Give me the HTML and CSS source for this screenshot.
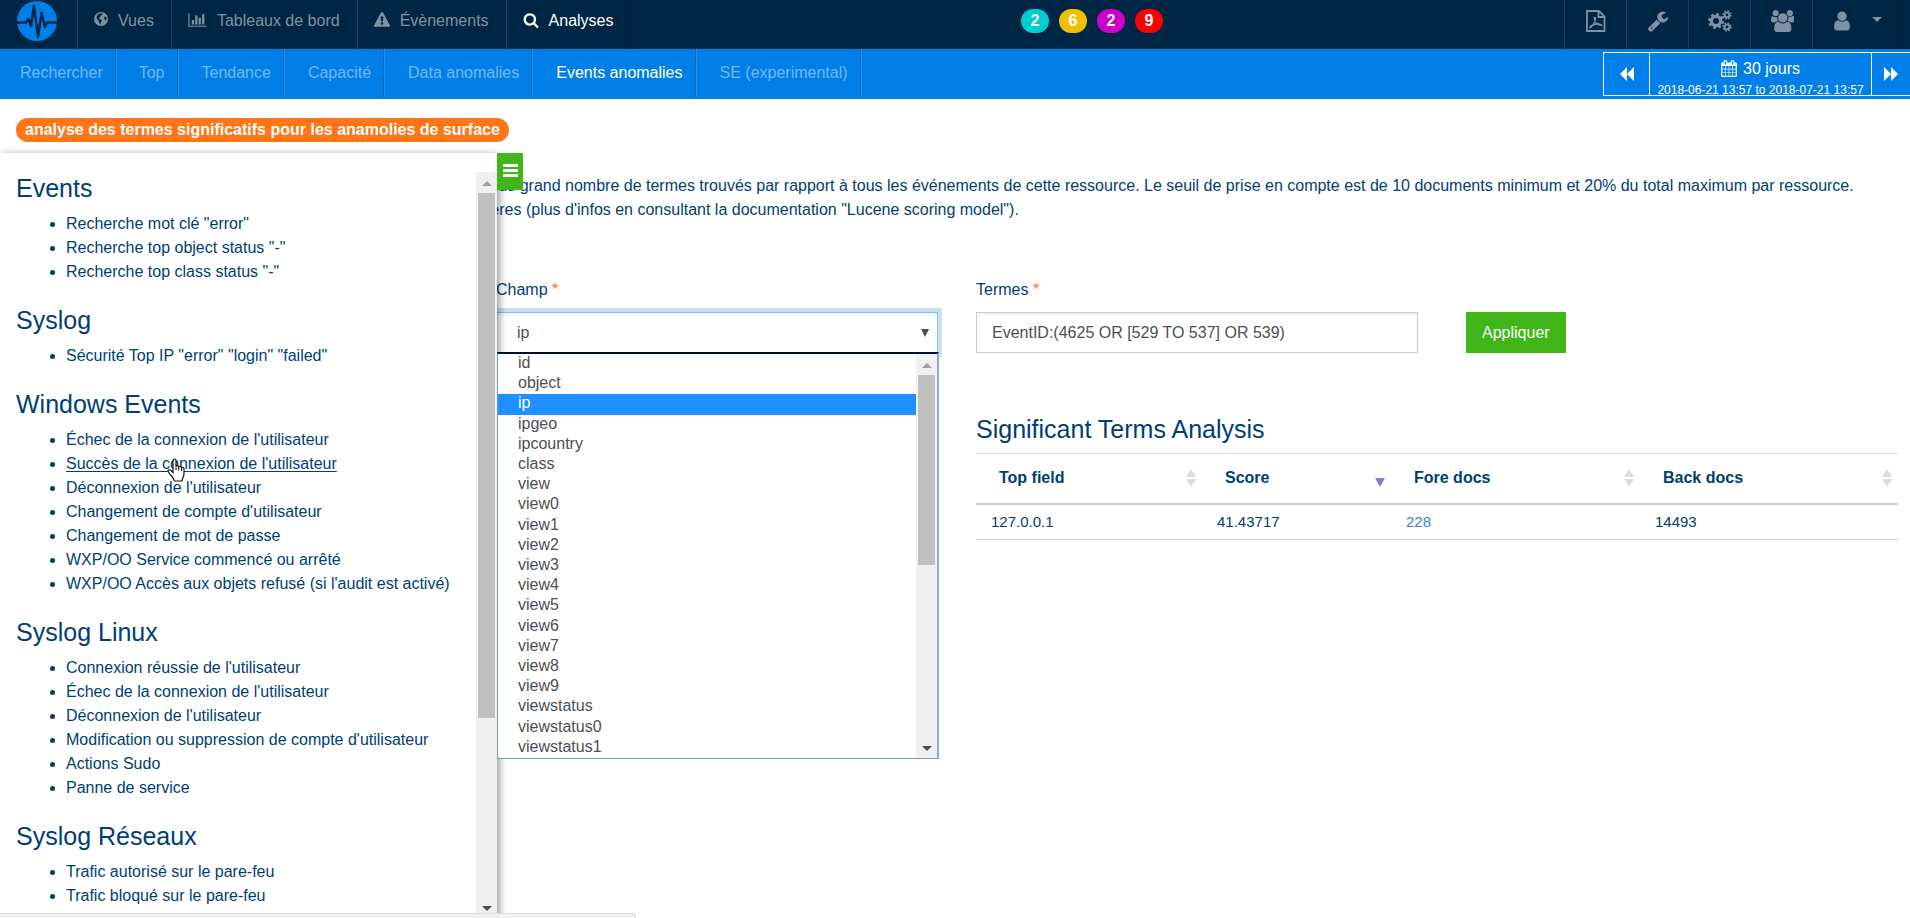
FILE: index.html
```
<!DOCTYPE html>
<html lang="fr">
<head>
<meta charset="utf-8">
<title>Events anomalies</title>
<link rel="stylesheet" href="styles.css">
</head>
<body>
<header class="topbar">
  <a class="logo" href="#" aria-label="Accueil">
    <svg width="40" height="40" viewBox="0 0 40 40"><circle cx="20" cy="20" r="20" fill="#007fe9"/><path d="M0 21.500H9L11.500 18L14 25L17 5L21 36L24.500 12L28 26L30 21.500H40" fill="none" stroke="#002645" stroke-width="2.400" stroke-linejoin="round"/></svg>
  </a>
  <nav class="mainnav">
    <a href="#"><svg width="14" height="14" viewBox="0 0 14 14"><circle cx="7" cy="7" r="7" fill="currentColor"/><path d="M5.500 1.500L8 1.200L9 2L7.500 3.200L6.300 4L6.700 5L5.500 5.300L5 6.800L7 7.600L8 9L6.800 10.500L6.200 12.500L5 10.500L4.700 8.500L3 7L2.500 5L3.500 3ZM10.500 4.500L12.300 5L12.600 7L11.800 8.800L10.800 8L10 6Z" fill="#002645"/></svg>Vues</a>
    <a href="#"><svg class="wide" width="19" height="16" viewBox="0 0 2048 1792"><path fill="currentColor" d="M640 896v512h-256v-512h256zm384-512v1024h-256v-1024h256zm1024 1152v128h-2048v-1536h128v1408h1920zm-640-896v768h-256v-768h256zm384-384v1152h-256v-1152h256z"/></svg>Tableaux de bord</a>
    <a href="#"><svg width="16" height="16" viewBox="0 0 1792 1792"><path fill="currentColor" d="M1024 1375v-190q0-14-9.500-23.500t-22.500-9.500h-192q-13 0-22.500 9.500t-9.500 23.500v190q0 14 9.500 23.500t22.500 9.500h192q13 0 22.500-9.500t9.500-23.500zm-2-374l18-459q0-12-10-19-13-11-24-11h-220q-11 0-24 11-10 7-10 21l17 457q0 10 10 16.500t24 6.500h185q14 0 23.500-6.500t10.500-16.500zm-14-934l768 1408q35 63-2 126-17 29-46.500 46t-63.500 17h-1536q-34 0-63.500-17t-46.500-46q-37-63-2-126l768-1408q17-31 47-49t65-18 65 18 47 49z"/></svg>Évènements</a>
    <a class="active" href="#"><svg width="16" height="16" viewBox="0 0 1792 1792"><path fill="currentColor" d="M1216 832q0-185-131.500-316.500t-316.500-131.500-316.500 131.500-131.500 316.500 131.500 316.500 316.500 131.500 316.500-131.500 131.500-316.500zm512 832q0 52-38 90t-90 38q-54 0-90-38l-343-342q-179 124-399 124-143 0-273.500-55.500t-225-150-150-225-55.500-273.500 55.500-273.500 150-225 225-150 273.500-55.500 273.500 55.500 225 150 150 225 55.500 273.500q0 220-124 399l343 343q37 37 37 90z"/></svg>Analyses</a>
  </nav>
  <div class="badges">
    <span class="badge teal">2</span><span class="badge yellow">6</span><span class="badge purple">2</span><span class="badge red">9</span>
  </div>
  <div class="tools">
    <a href="#" aria-label="PDF"><svg width="20" height="22" viewBox="0 0 20 22" fill="none" stroke="currentColor" stroke-width="1.800"><path d="M1 1H13L18.500 6.500V21H1ZM12.500 1V7H18.500"/><path stroke-width="1.300" d="M4 18C6 17 9.500 12 9.500 8.500C9.500 7 8 7 8.200 8.500C8.500 12 12 15.500 15.500 15.500C16.500 15 15 14 12 14C9 14.200 5 15.500 4 17Z"/></svg></a>
    <a href="#" aria-label="Outils"><svg width="22" height="22" viewBox="0 0 1792 1792"><path fill="currentColor" d="M448 1472q0-26-19-45t-45-19-45 19-19 45 19 45 45 19 45-19 19-45zm644-420l-682 682q-37 37-90 37-52 0-91-37l-106-108q-38-36-38-90 0-53 38-91l681-681q39 98 114.500 173.500t173.500 114.500zm634-435q0 39-23 106-47 134-164.500 217.500t-258.500 83.500q-185 0-316.500-131.500t-131.500-316.500 131.500-316.500 316.500-131.500q58 0 121.500 16.500t107.500 46.500q16 11 16 28t-16 28l-293 169v224l193 107q5-3 79-48.500t135.500-81 70.500-35.500q15 0 23.500 10t8.500 25z"/></svg></a>
    <a href="#" aria-label="Configuration"><svg width="24" height="22" viewBox="0 0 24 22" fill="none" stroke="currentColor"><circle cx="8" cy="11" r="4.600" stroke-width="3.200"/><circle cx="8" cy="11" r="6.800" stroke-width="2.400" stroke-dasharray="2.800 2.540"/><circle cx="19" cy="5" r="2.400" stroke-width="1.900"/><circle cx="19" cy="5" r="3.900" stroke-width="1.600" stroke-dasharray="1.600 1.463"/><circle cx="19" cy="17" r="2.400" stroke-width="1.900"/><circle cx="19" cy="17" r="3.900" stroke-width="1.600" stroke-dasharray="1.600 1.463"/></svg></a>
    <a href="#" aria-label="Groupes"><svg width="24" height="22" viewBox="0 0 1920 1792"><path fill="currentColor" d="M657 896q-162 5-265 128h-134q-82 0-138-40.500t-56-118.500q0-353 124-353 6 0 43.500 21t97.500 42.500 119 21.500q67 0 133-23-5 37-5 66 0 159 93 293zm1071 637q0 120-73 189.500t-194 69.500h-874q-121 0-194-69.500t-73-189.500q0-53 3.500-103.500t14-109 26.500-108.500 43-97.500 62-81 85.500-53.500 111.500-20q10 0 43 21.500t73 48 107 48 135 21.500 135-21.500 107-48 73-48 43-21.500q61 0 111.500 20t85.500 53.500 62 81 43 97.500 26.500 108.500 14 109 3.500 103.500zm-1024-1277q0 106-75 181t-181 75-181-75-75-181 75-181 181-75 181 75 75 181zm704 384q0 159-112.500 271.500t-271.500 112.500-271.500-112.500-112.500-271.500 112.500-271.500 271.500-112.500 271.500 112.500 112.500 271.500zm576 225q0 78-56 118.500t-138 40.500h-134q-103-123-265-128 93-134 93-293 0-29-5-66 66 23 133 23 59 0 119-21.500t97.500-42.500 43.500-21q124 0 124 353zm-128-609q0 106-75 181t-181 75-181-75-75-181 75-181 181-75 181 75 75 181z"/></svg></a>
    <a class="account" href="#" aria-label="Compte"><svg width="22" height="22" viewBox="0 0 1792 1792"><path fill="currentColor" d="M1536 1399q0 109-62.500 187t-150.500 78h-854q-88 0-150.500-78t-62.500-187q0-85 8.500-160.500t31.500-152 58.500-131 94-89 134.500-34.500q131 128 313 128t313-128q76 0 134.500 34.500t94 89 58.500 131 31.500 152 8.500 160.500zm-256-887q0 159-112.500 271.500t-271.500 112.500-271.500-112.500-112.500-271.500 112.500-271.500 271.500-112.500 271.500 112.500 112.500 271.500z"/></svg><svg width="10" height="5" viewBox="0 0 10 5"><path d="M0 0H10L5 5Z" fill="currentColor"/></svg></a>
  </div>
</header>
<div class="subbar">
  <nav class="subnav">
    <a href="#">Rechercher</a><a href="#">Top</a><a href="#">Tendance</a><a href="#">Capacité</a><a href="#">Data anomalies</a><a class="active" href="#">Events anomalies</a><a href="#">SE (experimental)</a>
  </nav>
  <div class="period">
    <button aria-label="Précédent"><svg width="14" height="14" viewBox="0 0 14 14"><path d="M7 0V14L0 7ZM14 0V14L7 7Z" fill="currentColor"/></svg></button>
    <button class="range"><span class="span"><svg width="16" height="17" viewBox="0 0 1664 1792"><path fill="currentColor" d="M128 1664h288v-288h-288v288zm352 0h320v-288h-320v288zm-352-352h288v-320h-288v320zm352 0h320v-320h-320v320zm-352-384h288v-288h-288v288zm736 736h320v-288h-320v288zm-384-736h320v-288h-320v288zm768 736h288v-288h-288v288zm-384-352h320v-320h-320v320zm-352-864v-288q0-13-9.500-22.500t-22.500-9.500h-64q-13 0-22.500 9.500t-9.500 22.500v288q0 13 9.500 22.500t22.500 9.500h64q13 0 22.500-9.500t9.500-22.500zm736 864h288v-320h-288v320zm-384-384h320v-288h-320v288zm384 0h288v-288h-288v288zm32-480v-288q0-13-9.500-22.500t-22.500-9.500h-64q-13 0-22.500 9.500t-9.500 22.500v288q0 13 9.500 22.500t22.500 9.500h64q13 0 22.500-9.500t9.500-22.500zm384-64v1280q0 52-38 90t-90 38h-1408q-52 0-90-38t-38-90v-1280q0-52 38-90t90-38h128v-96q0-66 47-113t113-47h64q66 0 113 47t47 113v96h384v-96q0-66 47-113t113-47h64q66 0 113 47t47 113v96h128q52 0 90 38t38 90z"/></svg>30 jours</span><span class="dates">2018-06-21 13:57 to 2018-07-21 13:57</span></button>
    <button aria-label="Suivant"><svg width="14" height="14" viewBox="0 0 14 14"><path d="M0 0V14L7 7ZM7 0V14L14 7Z" fill="currentColor"/></svg></button>
  </div>
</div>
<main class="page">
  <h1 class="title">analyse des termes significatifs pour les anamolies de surface</h1>
  <p class="intro">le plus grand nombre de termes trouvés par rapport à tous les événements de cette ressource. Le seuil de prise en compte est de 10 documents minimum et 20% du total maximum par ressource.<br>critères (plus d'infos en consultant la documentation "Lucene scoring model").</p>
  <form class="filters">
    <div class="field champ">
      <label for="champ">Champ <span class="req">*</span></label>
      <div class="picker">
        <select id="champ"><option>ip</option></select>
        <svg class="picker-arrow" width="8" height="8" viewBox="0 0 8 8"><path d="M0 0H8L4 8Z" fill="#4d4d4d"/></svg>
        <div class="dropdown">
          <ul role="listbox" aria-label="Champ">
            <li role="option">id</li><li role="option">object</li><li role="option" class="selected" aria-selected="true">ip</li><li role="option">ipgeo</li><li role="option">ipcountry</li><li role="option">class</li><li role="option">view</li><li role="option">view0</li><li role="option">view1</li><li role="option">view2</li><li role="option">view3</li><li role="option">view4</li><li role="option">view5</li><li role="option">view6</li><li role="option">view7</li><li role="option">view8</li><li role="option">view9</li><li role="option">viewstatus</li><li role="option">viewstatus0</li><li role="option">viewstatus1</li>
          </ul>
          <div class="scrollbar short"><i class="up"></i><i class="thumb"></i><i class="down"></i></div>
        </div>
      </div>
    </div>
    <div class="field termes">
      <label for="termes">Termes <span class="req">*</span></label>
      <input id="termes" type="text" value="EventID:(4625 OR [529 TO 537] OR 539)">
    </div>
    <button class="apply" type="button">Appliquer</button>
  </form>
  <div class="results">
    <section class="analysis">
      <h2>Significant Terms Analysis</h2>
      <table>
        <colgroup><col class="c1"><col class="c2"><col class="c3"><col class="c4"></colgroup>
        <thead><tr>
          <th><span class="th">Top field<svg width="10" height="18" viewBox="0 0 10 18"><path d="M5 0L10 8H0ZM0 10H10L5 18Z" fill="#dcdcdc"/></svg></span></th>
          <th><span class="th">Score<svg width="10" height="18" viewBox="0 0 10 18"><path d="M0 9H10L5 18Z" fill="#7f7fe0"/></svg></span></th>
          <th><span class="th">Fore docs<svg width="10" height="18" viewBox="0 0 10 18"><path d="M5 0L10 8H0ZM0 10H10L5 18Z" fill="#dcdcdc"/></svg></span></th>
          <th><span class="th">Back docs<svg width="10" height="18" viewBox="0 0 10 18"><path d="M5 0L10 8H0ZM0 10H10L5 18Z" fill="#dcdcdc"/></svg></span></th>
        </tr></thead>
        <tbody><tr><td>127.0.0.1</td><td>41.43717</td><td><a href="#">228</a></td><td>14493</td></tr></tbody>
      </table>
    </section>
  </div>
  <aside class="drawer">
    <button class="toggle" aria-label="Menu"><svg width="15" height="13" viewBox="0 0 15 13"><path d="M0 0H15V3H0ZM0 5H15V8H0ZM0 10H15V13H0Z" fill="#fff"/></svg></button>
    <div class="drawer-body">
      <div class="drawer-list">
        <h3>Events</h3>
        <ul><li><a href="#">Recherche mot clé "error"</a></li><li><a href="#">Recherche top object status "-"</a></li><li><a href="#">Recherche top class status "-"</a></li></ul>
        <h3>Syslog</h3>
        <ul><li><a href="#">Sécurité Top IP "error" "login" "failed"</a></li></ul>
        <h3>Windows Events</h3>
        <ul><li><a href="#">Échec de la connexion de l'utilisateur</a></li><li><a class="hovered" href="#">Succès de la connexion de l'utilisateur<svg class="pointer" width="18" height="24" viewBox="0 0 18 24"><path d="M6 13V2.500C6 .5 9 .5 9 2.500V8.500C9.500 7.300 11.500 7.500 11.800 9C12.500 8 14.300 8.300 14.500 9.800C15.500 9 17 9.500 17 11V16C17 18 15.500 19.500 15 23H7.500C7 20 3 17 1.200 13.500C.5 12 2.500 11 4 12.500L6 14.500Z" fill="#fff" stroke="#111" stroke-width="1.200"/><path d="M9 8.500V12M11.800 9.500V12.500M14.500 10V13" stroke="#111" stroke-width="1"/></svg></a></li><li><a href="#">Déconnexion de l'utilisateur</a></li><li><a href="#">Changement de compte d'utilisateur</a></li><li><a href="#">Changement de mot de passe</a></li><li><a href="#">WXP/OO Service commencé ou arrêté</a></li><li><a href="#">WXP/OO Accès aux objets refusé (si l'audit est activé)</a></li></ul>
        <h3>Syslog Linux</h3>
        <ul><li><a href="#">Connexion réussie de l'utilisateur</a></li><li><a href="#">Échec de la connexion de l'utilisateur</a></li><li><a href="#">Déconnexion de l'utilisateur</a></li><li><a href="#">Modification ou suppression de compte d'utilisateur</a></li><li><a href="#">Actions Sudo</a></li><li><a href="#">Panne de service</a></li></ul>
        <h3>Syslog Réseaux</h3>
        <ul><li><a href="#">Trafic autorisé sur le pare-feu</a></li><li><a href="#">Trafic bloqué sur le pare-feu</a></li><li><a href="#">Hôtes du trafic identifié bloqué par le pare-feu</a></li></ul>
      </div>
      <div class="scrollbar long"><i class="up"></i><i class="thumb"></i><i class="down"></i></div>
    </div>
  </aside>
  <div class="statusbar"></div>
</main>
</body>
</html>
```
FILE: styles.css
```
* { box-sizing: border-box; }

body {
  margin: 0;
  height: 100vh;
  display: flex;
  flex-direction: column;
  overflow: hidden;
  background: #fff;
  color: #003e73;
  font: 16px/24px "Liberation Sans", Arial, sans-serif;
}

a { color: inherit; text-decoration: none; }
ul { margin: 0; padding: 0; }
svg { display: block; flex: none; }
button, input, select { font: inherit; margin: 0; border-radius: 0; }

/* top bar */
.topbar {
  flex: none;
  display: flex;
  height: 49px;
  background: #002645;
  color: #8092a2;
  position: relative;
}
.logo { padding: 1px 20px 0 17px; border-right: 1px solid #1d3e5a; }
.mainnav { display: flex; }
.mainnav a {
  display: flex;
  gap: 10px;
  padding: 9px 17px 0 16px;
  border-right: 1px solid #1d3e5a;
}
.mainnav svg { margin-top: 3px; }
.mainnav .active { color: #fff; border-right-color: #001a30; }
.badges {
  position: absolute;
  left: 0;
  right: 0;
  top: 9px;
  display: flex;
  justify-content: center;
  gap: 10px;
  padding-left: 274px;
  pointer-events: none;
}
.badge {
  width: 28px;
  height: 24px;
  border-radius: 12px;
  color: #fff;
  font-weight: bold;
  text-align: center;
}
.teal { background: #00cccc; }
.yellow { background: #f0bf00; }
.purple { background: #cc00cc; }
.red { background: #ff0000; }
.tools { display: flex; margin-left: auto; padding-right: 13px; }
.tools a {
  width: 62px;
  display: flex;
  justify-content: center;
  padding-top: 10px;
  border-left: 1px solid #1d3e5a;
}
.tools .account { width: 85px; gap: 19px; padding-left: 4px; border-right: 1px solid #001a30; }
.account svg:last-child { margin-top: 7px; }

/* second bar */
.subbar {
  flex: none;
  display: flex;
  justify-content: space-between;
  align-items: flex-start;
  height: 50px;
  background: #007fe9;
  color: #73b9f3;
}
.subnav { display: flex; }
.subnav a {
  height: 48px;
  padding: 12px 12px 0 23px;
  border-right: 1px solid #0068bf;
  box-shadow: 1px 0 #2491ee;
}
.subnav a:first-child { padding-left: 20px; }
.subnav a + a + a { padding-left: 24px; }
.subnav .active { color: #fff; }
.period { display: flex; margin-top: 3px; height: 44px; border: 1px solid #fff; border-right: 0; }
.period button {
  display: flex;
  align-items: center;
  justify-content: center;
  width: 45px;
  padding: 0;
  border: 0;
  background: none;
  color: #fff;
}
.period button:last-child { width: 38px; }
.period .range {
  flex-direction: column;
  justify-content: flex-start;
  width: 223px;
  padding-top: 4px;
  border: solid #fff;
  border-width: 0 1px;
}
.span { display: flex; gap: 6px; line-height: 24px; }
.span svg { margin-top: 3px; }
.dates { font-size: 12px; line-height: 18px; white-space: nowrap; }

/* page */
.page { flex: 1; min-height: 0; position: relative; padding: 19px 12px 0 16px; }
.title {
  display: table;
  margin: 0;
  padding: 0 9px;
  border-radius: 12px;
  background: #ff7518;
  color: #fff;
  font-size: 16px;
  line-height: 24px;
}
.intro { margin: 32px 0 0; padding-left: 453px; white-space: nowrap; }

.filters, .results { display: grid; grid-template-columns: repeat(4, 1fr); column-gap: 38px; }
.filters { margin-top: 56px; }
.champ { grid-column: 2; }
.field label { display: block; margin-bottom: 10px; }
.req { color: #ff7518; }
.field input, .field select {
  display: block;
  width: 100%;
  height: 41px;
  padding: 0 15px;
  border: 1px solid #c8ccd4;
  background: #fff;
  color: #4d4f53;
  box-shadow: inset 0 2px 3px #f0f0f0;
}
.picker { position: relative; }
.field select {
  appearance: none;
  padding: 0 20px;
  border-color: #8ebcf0;
  outline: 4px solid #c7dff8;
}
.picker-arrow { position: absolute; right: 9px; top: 17px; }
.dropdown {
  position: absolute;
  z-index: 5;
  top: 40px;
  left: 1px;
  right: -1px;
  height: 407px;
  display: flex;
  border: 1px solid #7095cc;
  border-top: 2px solid #00102a;
  border-right: 2px solid #86aae0;
  background: #fff;
}
.dropdown ul {
  flex: 1;
  display: flex;
  flex-direction: column;
  list-style: none;
  color: #4d4f53;
}
.dropdown li { flex: 1; padding-left: 20px; line-height: 18px; }
.dropdown .selected { background: #1e90ff; color: #fff; }
.apply {
  align-self: end;
  justify-self: start;
  height: 41px;
  margin-left: 10px;
  padding: 0 16px;
  border: 0;
  background: #40b618;
  color: #fff;
}

.results { margin-top: 58px; }
.analysis { grid-column: 3 / 5; }
.analysis h2 { margin: 0; font-size: 25px; font-weight: normal; line-height: 36px; }
table { width: 100%; margin-top: 6px; border-collapse: collapse; table-layout: fixed; }
.c1 { width: 226px; }
.c2 { width: 189px; }
.c3 { width: 249px; }
.c4 { width: 258px; }
th { height: 50px; padding: 0 6px 0 23px; border-top: 1px solid #ddd; border-bottom: 2px solid #ccc; text-align: left; }
.th { display: flex; justify-content: space-between; align-items: center; }
td { height: 36px; padding: 1px 15px 0; border-bottom: 1px solid #ccc; font-size: 15px; }
td a { color: #3b7ddd; }

/* drawer */
.drawer {
  position: absolute;
  top: 54px;
  bottom: 0;
  left: 0;
  width: 497px;
  padding-top: 19px;
  background: #fff;
  box-shadow: 2px 2px 8px rgba(0, 0, 0, .45);
}
.toggle {
  position: absolute;
  left: 497px;
  top: 0;
  display: flex;
  justify-content: center;
  width: 26px;
  height: 37px;
  padding: 11px 0 0;
  border: 0;
  background: #40b618;
}
.drawer-body { display: flex; height: 100%; }
.drawer-list { flex: 1; padding: 1px 0 0 16px; overflow: hidden; }
.drawer-list h3 { margin: 0 0 9px; font-size: 25px; font-weight: normal; line-height: 30px; }
.drawer-list ul { margin-bottom: 21px; padding-left: 50px; }
.hovered { position: relative; text-decoration: underline; text-underline-offset: 2px; }
.pointer { position: absolute; left: 101px; top: 3px; }

.scrollbar {
  flex: none;
  display: flex;
  flex-direction: column;
  align-items: center;
  width: 21px;
  background: #f0f0f0;
}
.up, .down { border: 5px solid transparent; }
.up { margin: 4px 0 7px; border-bottom-color: #a0a0a0; }
.down { margin: auto 0 2px; border-top-color: #4d4d4d; }
.thumb { width: 17px; background: #c1c1c1; }
.long .thumb { height: 525px; }
.short .thumb { height: 47%; }

.statusbar {
  position: absolute;
  left: 0;
  bottom: 0;
  width: 636px;
  height: 5px;
  border: solid #dadada;
  border-width: 1px 1px 0 0;
  border-top-right-radius: 4px;
  background: #f2f2f2;
}
```
